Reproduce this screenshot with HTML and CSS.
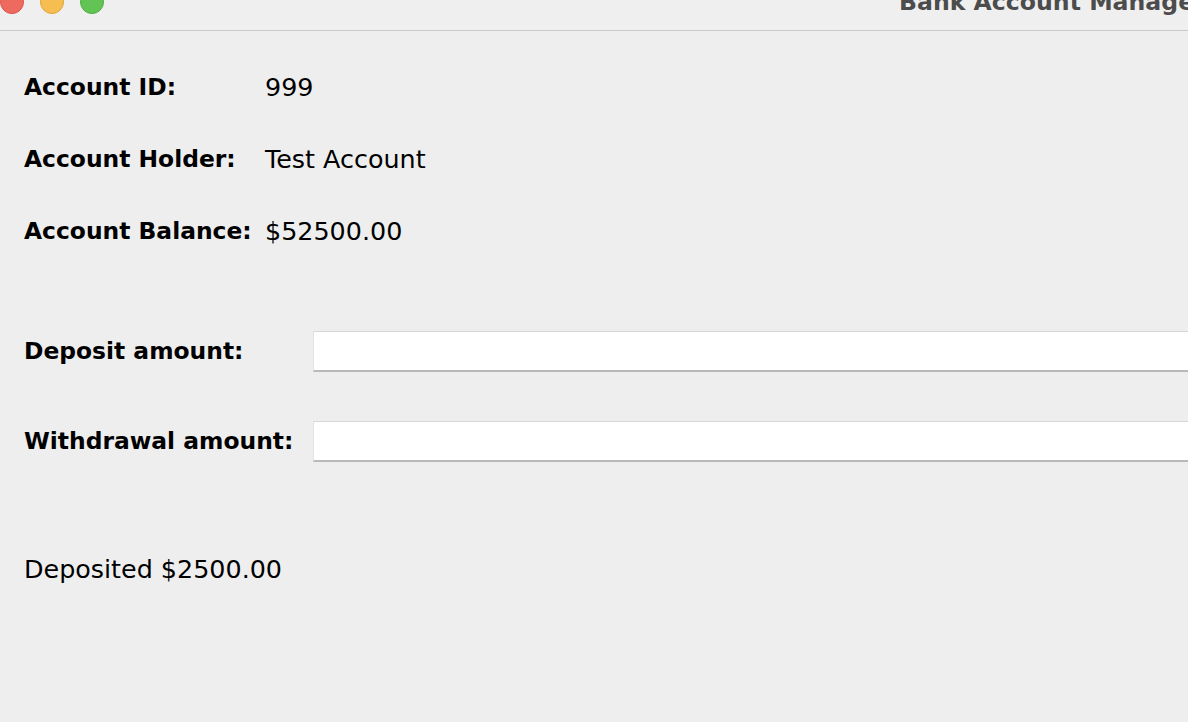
FILE: index.html
```html
<!DOCTYPE html>
<html>
<head>
<meta charset="utf-8">
<link rel="stylesheet" href="styles.css">
</head>
<body>
<div class="window">
  <div class="titlebar">
    <div class="lights">
      <span class="light red"></span>
      <span class="light yellow"></span>
      <span class="light green"></span>
    </div>
    <div class="title">Bank Account Manager</div>
  </div>
  <div class="content">
    <div class="info">
      <div class="label">Account ID:</div><div class="value">999</div>
      <div class="label">Account Holder:</div><div class="value">Test Account</div>
      <div class="label">Account Balance:</div><div class="value">$52500.00</div>
    </div>
    <div class="form">
      <div class="label">Deposit amount:</div><div class="field"></div>
      <div class="label">Withdrawal amount:</div><div class="field"></div>
    </div>
    <div class="status">Deposited $2500.00</div>
  </div>
</div>
</body>
</html>
```
FILE: styles.css
```css
html, body {
  margin: 0;
  padding: 0;
  background: #eeeeee;
  overflow: hidden;
}
.window {
  width: 1188px;
  height: 722px;
  font-family: "DejaVu Sans", sans-serif;
  color: #000;
  overflow: hidden;
}
.titlebar {
  height: 30px;
  background: #efefef;
  border-bottom: 1px solid #cacaca;
  display: flex;
  align-items: flex-start;
  overflow: hidden;
  white-space: nowrap;
}
.lights {
  display: flex;
  gap: 16px;
  margin-top: -10px;
  width: 899px;
  flex: none;
}
.light {
  width: 22px;
  height: 22px;
  border-radius: 50%;
  border: 1px solid transparent;
}
.red { background: #ee6a5f; border-color: #d9544a; }
.yellow { background: #f6be50; border-color: #dea43a; }
.green { background: #61c454; border-color: #4ead43; }
.title {
  font-weight: bold;
  font-size: 23.6px;
  line-height: 24px;
  color: #4c4c4c;
  margin-top: -10px;
}
.content {
  padding: 20px 0 0 24px;
}
.info {
  display: grid;
  grid-template-columns: 241px auto;
  grid-auto-rows: 72px;
  align-items: center;
  justify-content: start;
}
.label {
  font-weight: bold;
  font-size: 23.4px;
}
.value {
  font-size: 25.4px;
}
.form {
  margin-top: 64px;
  display: grid;
  grid-template-columns: 289px 1fr;
  grid-auto-rows: 40px;
  row-gap: 50px;
  align-items: start;
  margin-right: -100px;
}
.form .label {
  line-height: 40px;
}
.field {
  height: 38px;
  background: #ffffff;
  border-top: 1px solid #d6d6d6;
  border-left: 1px solid #e2e2e2;
  border-bottom: 2px solid #b9b9b9;
}
.status {
  margin-top: 94px;
  font-size: 25.4px;
  line-height: 28px;
}
```
